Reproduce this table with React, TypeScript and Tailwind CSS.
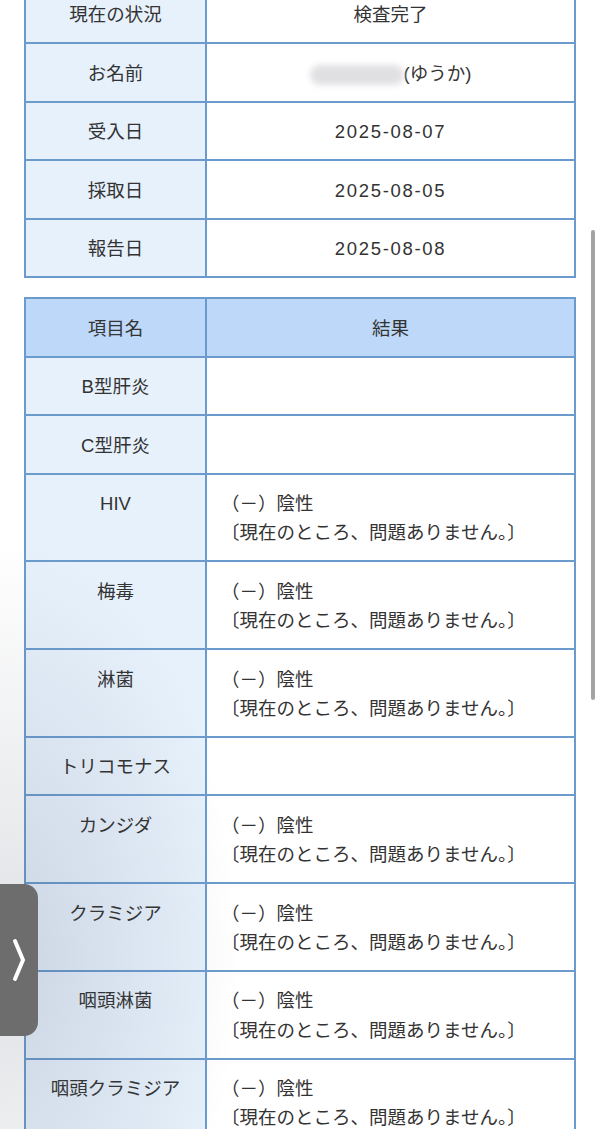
const info = [
  { label: '現在の状況', value: '検査完了' },
  { label: 'お名前', value: 'name' },
  { label: '受入日', value: '2025-08-07' },
  { label: '採取日', value: '2025-08-05' },
  { label: '報告日', value: '2025-08-08' },
]

const results: { name: string; negative: boolean }[] = [
  { name: 'B型肝炎', negative: false },
  { name: 'C型肝炎', negative: false },
  { name: 'HIV', negative: true },
  { name: '梅毒', negative: true },
  { name: '淋菌', negative: true },
  { name: 'トリコモナス', negative: false },
  { name: 'カンジダ', negative: true },
  { name: 'クラミジア', negative: true },
  { name: '咽頭淋菌', negative: true },
  { name: '咽頭クラミジア', negative: true },
]

const cell = 'border-r-2 border-b-2 border-[#6b9bcd] pt-[14.5px] pb-[12.75px] leading-[29.25px]'

export default function App() {
  return (
    <div
      className="relative h-[1129px] overflow-hidden bg-white text-[18.5px] text-[#333]"
      style={{ fontFamily: '"Liberation Sans", "Noto Sans CJK JP", sans-serif' }}
    >
      <div className="mx-[24px] mt-[-16.5px] grid grid-cols-[181px_1fr] border-t-2 border-l-2 border-[#6b9bcd]">
        {info.map((row) => (
          <div key={row.label} className="contents">
            <div className={`${cell} bg-[#e7f1fc] text-center`}>{row.label}</div>
            <div className={`${cell} bg-white text-center`}>
              {row.value === 'name' ? (
                <>
                  <span className="inline-block h-[20px] w-[94px] rounded-full bg-[#e0e0e3] align-middle blur-[3px]" />
                  <span>(ゆうか)</span>
                </>
              ) : row.value.startsWith('2025') ? (
                <span className="tracking-[1.7px]">{row.value}</span>
              ) : (
                row.value
              )}
            </div>
          </div>
        ))}
      </div>

      <div className="mx-[24px] mt-[19px] grid grid-cols-[181px_1fr] border-t-2 border-l-2 border-[#6b9bcd]">
        <div className={`${cell} bg-[#bdd8f8] text-center`}>項目名</div>
        <div className={`${cell} bg-[#bdd8f8] text-center`}>結果</div>
        {results.map((r) => (
          <div key={r.name} className="contents">
            <div className={`${cell} bg-[#e7f1fc] text-center`}>{r.name}</div>
            <div className={`${cell} bg-white pl-[14px]`}>
              {r.negative ? (
                <>
                  <div>（－）陰性</div>
                  <div className="whitespace-nowrap">〔現在のところ、問題ありません。〕</div>
                </>
              ) : (
                <div>&nbsp;</div>
              )}
            </div>
          </div>
        ))}
      </div>

      {/* shade from the side handle */}
      <div className="pointer-events-none absolute inset-0 bg-[radial-gradient(ellipse_240px_420px_at_0px_960px,rgba(60,70,90,0.16),transparent)]" />

      {/* side handle */}
      <div className="absolute left-0 top-[884px] flex h-[152px] w-[38px] items-center justify-center rounded-r-[14px] bg-[#6d6d6d]">
        <svg width="14" height="44" viewBox="0 0 14 44" fill="none">
          <polyline points="3,3 11,22 3,41" stroke="white" strokeWidth="4" strokeLinecap="round" strokeLinejoin="round" />
        </svg>
      </div>

      {/* scrollbar */}
      <div className="absolute right-[5px] top-[230px] h-[470px] w-[4px] rounded-full bg-[#a3a3a3]" />
    </div>
  )
}
